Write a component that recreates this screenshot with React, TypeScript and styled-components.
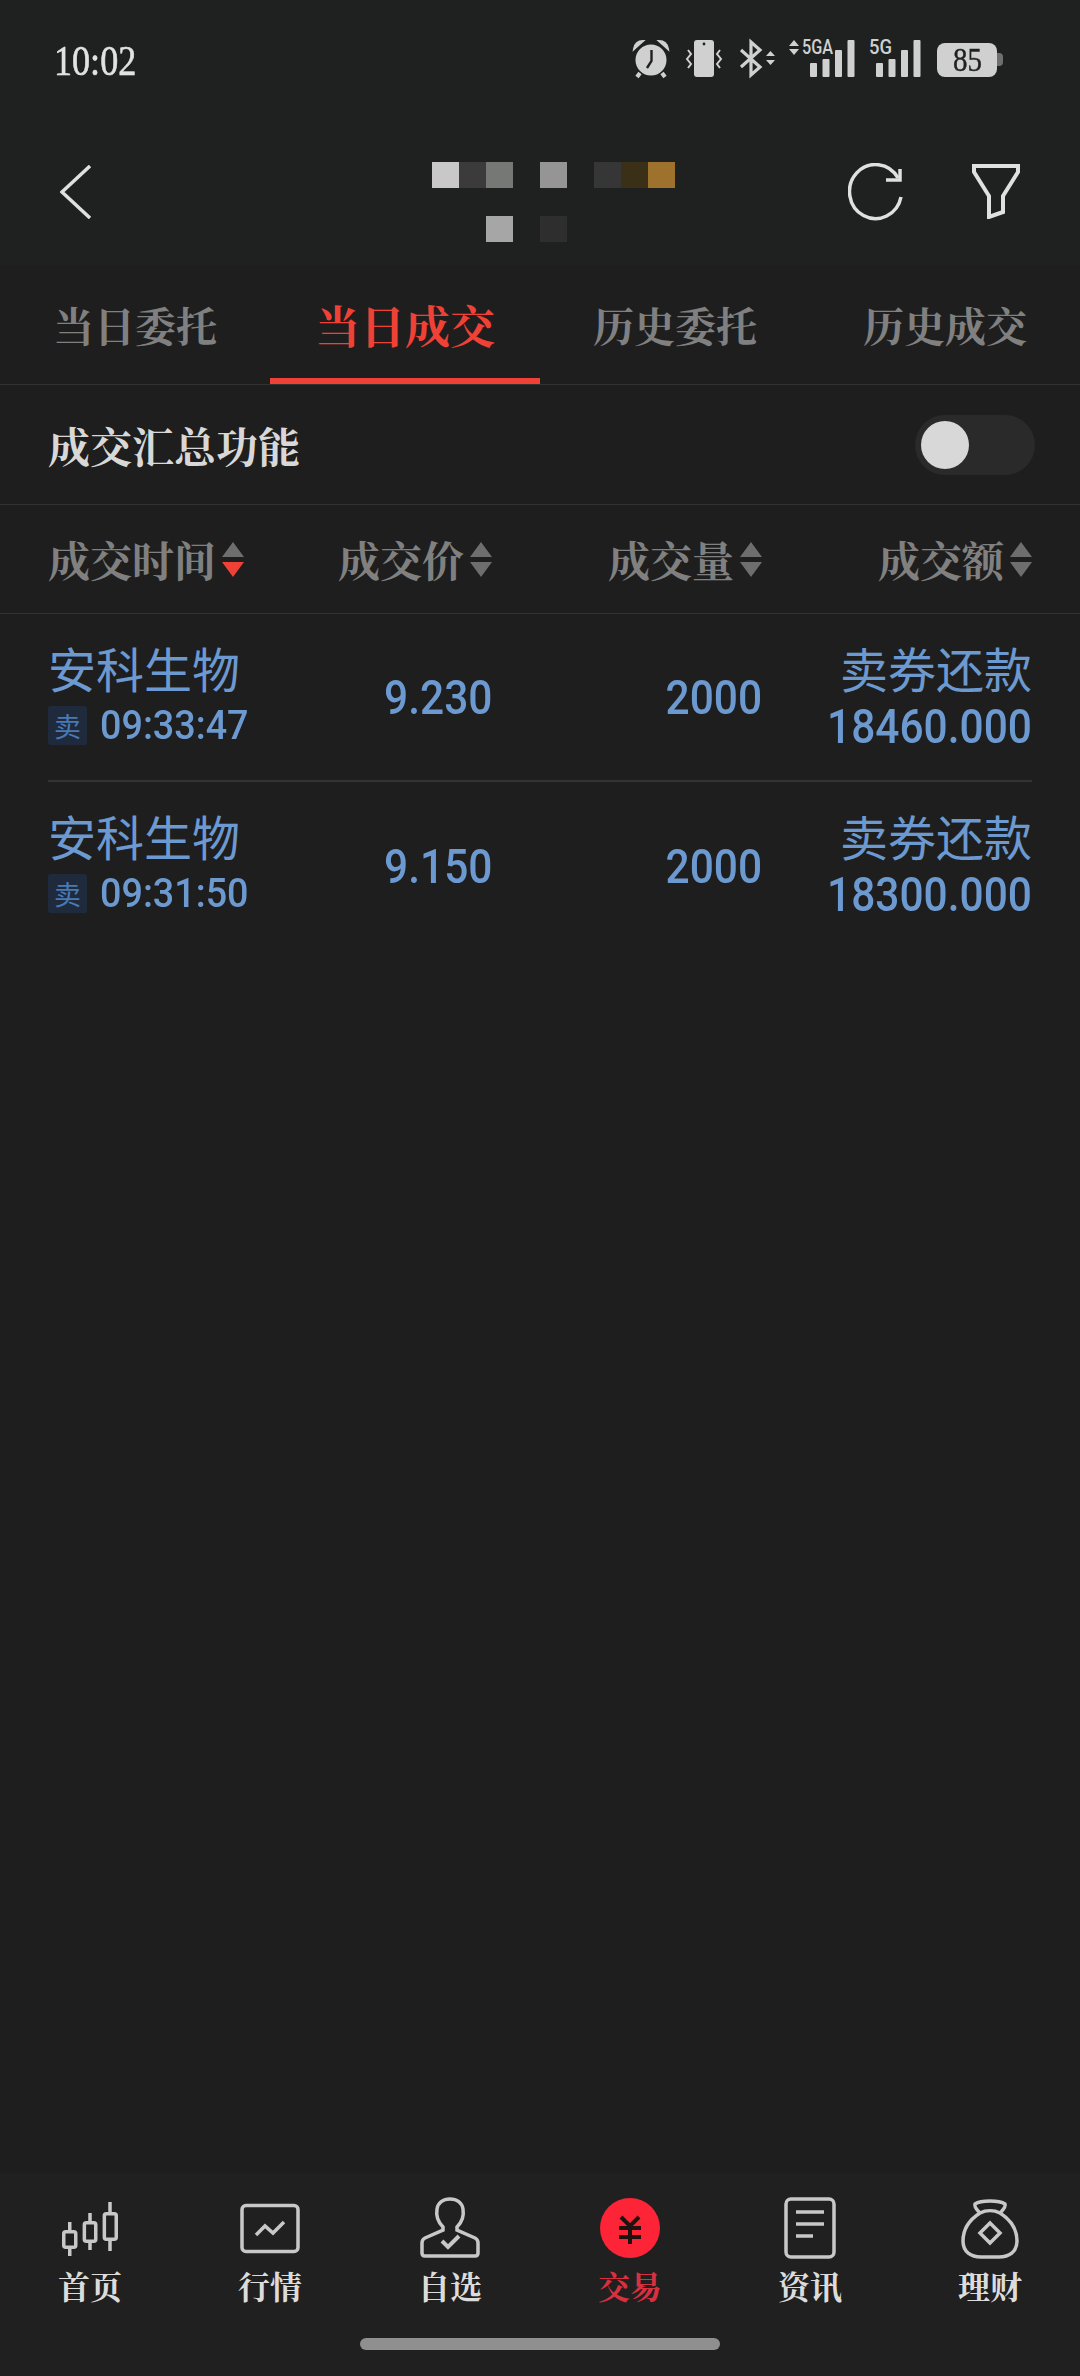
import React from 'react';
import styled, { createGlobalStyle } from 'styled-components';

const CJK = `'Noto Serif CJK SC', 'Noto Sans CJK SC', serif`;
const NUM = `Roboto, 'Noto Sans CJK SC', sans-serif`;

const GlobalStyle = createGlobalStyle`
  html, body {
    margin: 0;
    padding: 0;
    background: #1e1e1e;
  }
  * { box-sizing: border-box; }
`;

const Page = styled.div`
  width: 1080px;
  height: 2376px;
  display: flex;
  flex-direction: column;
  overflow: hidden;
  background: #1e1e1e;
`;

const TopArea = styled.div`
  height: 265px;
  background: #1f2120;
`;

const StatusBar = styled.div`
  height: 84px;
  padding: 40px 83px 0 54px;
  display: flex;
  justify-content: space-between;
  align-items: flex-start;
`;

const Clock = styled.div`
  font-family: 'Liberation Serif', serif;
  font-size: 43px;
  line-height: 41px;
  color: #e2e2e2;
  -webkit-text-stroke: 0.6px #e2e2e2;
  transform: scaleX(0.84);
  transform-origin: left center;
`;

const StatusIcons = styled.div`
  display: flex;
  align-items: flex-start;
  svg { display: block; overflow: visible; }
`;

const SignalGap = styled.div`
  width: 14px;
`;

const Battery = styled.div`
  width: 60px;
  height: 34px;
  margin: 3px 0 0 16px;
  border-radius: 8px;
  background: #d0d0d0;
  color: #1f2120;
  text-align: center;
  position: relative;
  &::after {
    content: '';
    position: absolute;
    right: -6px;
    top: 10px;
    width: 6px;
    height: 13px;
    border-radius: 0 4px 4px 0;
    background: #6f6f6f;
  }
`;

const BatteryLevel = styled.span`
  display: inline-block;
  font-family: 'Liberation Serif', serif;
  font-size: 33px;
  line-height: 34px;
  -webkit-text-stroke: 0.4px #1f2120;
  transform: scaleX(0.88);
`;

const NavBar = styled.div`
  height: 181px;
  padding: 0 59px 0 60px;
  display: grid;
  grid-template-columns: 372px 243px 1fr;
  align-items: start;
  svg { display: block; }
`;

const BackIcon = styled.svg`
  margin-top: 81px;
`;

const Title = styled.div`
  margin-top: 78px;
  display: grid;
  grid-template-columns: repeat(9, 27px);
  grid-auto-rows: 26px;
  row-gap: 28px;
`;

const Cell = styled.div<{ $c?: string }>`
  background: ${(p) => p.$c || 'transparent'};
  filter: blur(0.6px);
`;

const NavActions = styled.div`
  display: flex;
  margin-top: 79px;
  gap: 67px;
  align-items: flex-start;
  justify-content: flex-end;
`;

const Tabs = styled.div`
  height: 120px;
  display: grid;
  grid-template-columns: repeat(4, 270px);
  border-bottom: 1px solid #333;
`;

const Tab = styled.div<{ $active?: boolean }>`
  font-family: ${CJK};
  font-size: ${(p) => (p.$active ? '45px' : '41px')};
  font-weight: 700;
  color: ${(p) => (p.$active ? '#ef4136' : '#808080')};
  text-align: center;
  line-height: 119px;
  height: 119px;
  border-bottom: ${(p) => (p.$active ? '6px solid #ef4136' : '0')};
`;

const SummaryRow = styled.div`
  height: 120px;
  padding: 0 45px 0 48px;
  display: flex;
  align-items: center;
  justify-content: space-between;
  border-bottom: 1px solid #333;
`;

const SummaryLabel = styled.div`
  font-family: ${CJK};
  font-size: 42px;
  font-weight: 700;
  color: #d8d8d8;
`;

const Toggle = styled.div`
  width: 120px;
  height: 60px;
  border-radius: 30px;
  background: #2a2a2a;
  padding: 6px;
`;

const Knob = styled.div`
  width: 48px;
  height: 48px;
  border-radius: 50%;
  background: #d8d8d8;
`;

const HeadRow = styled.div`
  height: 109px;
  padding: 0 48px;
  display: grid;
  grid-template-columns: 444px 270px 270px;
  border-bottom: 1px solid #333;
`;

const HeadGroup = styled.div`
  display: grid;
  grid-template-columns: 1fr 1fr;
`;

const HeadCell = styled.div<{ $right?: boolean }>`
  display: flex;
  align-items: center;
  justify-content: ${(p) => (p.$right ? 'flex-end' : 'flex-start')};
  font-family: ${CJK};
  font-size: 42px;
  font-weight: 700;
  color: #808080;
`;

const SortWrap = styled.div`
  display: flex;
  flex-direction: column;
  gap: 5px;
  margin-left: 6px;
`;

const Arrow = styled.div<{ $down?: boolean; $on?: boolean }>`
  width: 0;
  height: 0;
  border-left: 11px solid transparent;
  border-right: 11px solid transparent;
  ${(p) =>
    p.$down
      ? `border-top: 15px solid ${p.$on ? '#ef4136' : '#6e6e6e'};`
      : `border-bottom: 15px solid ${p.$on ? '#ef4136' : '#6e6e6e'};`}
`;

const DataList = styled.div`
  flex: 1;
  padding: 0 48px;
`;

const DataRow = styled.div<{ $last?: boolean }>`
  height: 168px;
  display: grid;
  grid-template-columns: 444px 270px 270px;
  border-bottom: ${(p) => (p.$last ? '0' : '2px solid #333')};
  color: #6c99cf;
`;

const FirstGroup = styled.div`
  display: grid;
  grid-template-columns: 1fr 1fr;
`;

const NameCell = styled.div`
  padding-top: 24px;
`;

const StockName = styled.div`
  font-family: 'Noto Sans CJK SC', sans-serif;
  font-size: 48px;
  line-height: 58px;
  white-space: nowrap;
`;

const TimeLine = styled.div`
  margin-top: 10px;
  display: flex;
  align-items: center;
  gap: 13px;
`;

const SideBadge = styled.div`
  width: 39px;
  height: 39px;
  border-radius: 3px;
  background: #1f2b3d;
  color: #4a7ab4;
  font-family: 'Noto Sans CJK SC', sans-serif;
  font-size: 27px;
  line-height: 39px;
  text-align: center;
`;

const TimeText = styled.div`
  font-family: ${NUM};
  font-size: 41px;
  font-weight: 500;
  line-height: 39px;
  transform: scaleX(0.92);
  transform-origin: left center;
`;

const NumCell = styled.div`
  display: flex;
  align-items: center;
  justify-content: flex-end;
`;

const NumText = styled.span`
  font-family: ${NUM};
  font-size: 48px;
  font-weight: 500;
  transform: scaleX(0.885);
  transform-origin: right center;
`;

const AmountCell = styled.div`
  padding-top: 24px;
  text-align: right;
`;

const AmountType = styled.div`
  font-family: 'Noto Sans CJK SC', sans-serif;
  font-size: 48px;
  line-height: 58px;
`;

const AmountValue = styled.div`
  margin-top: 6px;
  font-family: ${NUM};
  font-size: 48px;
  font-weight: 500;
  line-height: 50px;
  transform: scaleX(0.885);
  transform-origin: right center;
`;

const BottomBar = styled.div`
  height: 203px;
  background: #202020;
  display: flex;
  flex-direction: column;
  align-items: center;
`;

const BottomTabs = styled.div`
  width: 100%;
  display: grid;
  grid-template-columns: repeat(6, 180px);
  padding-top: 24px;
`;

const BottomTab = styled.div<{ $active?: boolean }>`
  display: flex;
  flex-direction: column;
  align-items: center;
  font-family: ${CJK};
  font-size: 32px;
  font-weight: 700;
  line-height: 44px;
  color: ${(p) => (p.$active ? '#d93040' : '#dcdcdc')};
  svg { display: block; }
`;

const TabLabel = styled.div`
  margin-top: 4px;
`;

const HomeIndicator = styled.div`
  margin-top: 31px;
  width: 360px;
  height: 12px;
  border-radius: 6px;
  background: #8f8f8f;
`;

const LIGHT = '#d0d0d0';
const DARK = '#1f2120';
const LINE = '#c8c8c8';

const tabs = ['当日委托', '当日成交', '历史委托', '历史成交'];

const titleCells: (string | undefined)[] = [
  '#c8c8c8', '#3a3b3a', '#767876', undefined, '#959595', undefined, '#353635', '#3a3018', '#9e722c',
  undefined, undefined, '#a6a6a6', undefined, '#2e2e2e', undefined, undefined, undefined, undefined,
];

const trades = [
  { time: '09:33:47', price: '9.230', amount: '18460.000' },
  { time: '09:31:50', price: '9.150', amount: '18300.000' },
];

function AlarmIcon() {
  return (
    <svg width="38" height="38" viewBox="0 0 38 38" style={{ marginRight: 16 }}>
      <path d="M2 9 C3 3 7 1 11 1 Z M36 9 C35 3 31 1 27 1 Z" fill={LIGHT} stroke={LIGHT} strokeWidth="2" />
      <path d="M8 33 L5 37 M30 33 L33 37" stroke={LIGHT} strokeWidth="4" />
      <circle cx="19" cy="20" r="15.5" fill={LIGHT} />
      <path d="M19.5 10 V21 L15 28" fill="none" stroke={DARK} strokeWidth="2.4" />
    </svg>
  );
}

function VibrateIcon() {
  return (
    <svg width="36" height="37" viewBox="0 0 36 37" style={{ marginRight: 18 }}>
      <rect x="8" y="0" width="20" height="37" rx="3" fill={LIGHT} />
      <circle cx="18" cy="4" r="1.4" fill={DARK} />
      <path d="M2 10 L5 14 L1 19 L5 24 L2 28 M34 10 L31 14 L35 19 L31 24 L34 28" fill="none" stroke={LIGHT} strokeWidth="2" />
    </svg>
  );
}

function BluetoothIcon() {
  return (
    <svg width="35" height="37" viewBox="0 0 35 37" style={{ marginRight: 14 }}>
      <path d="M1 10 L20 27 L11 35 V2 L20 10 L1 27" fill="none" stroke={LIGHT} strokeWidth="3.2" />
      <path d="M26 16 L30.500 11 L35 16 Z M26 20 L30.500 25 L35 20 Z" fill={LIGHT} />
    </svg>
  );
}

function SignalIcon({ label, arrows }: { label: string; arrows?: boolean }) {
  const left = arrows ? 21 : 7;
  const width = left + 45;
  return (
    <svg width={width} height="37" viewBox={`0 0 ${width} 37`}>
      {arrows && <path d="M0 6 L5 0 L10 6 Z M0 9 L5 15 L10 9 Z" fill={LIGHT} />}
      <text x={arrows ? 13 : 0} y="14" fontFamily="Roboto, sans-serif" fontSize="20" fontWeight="500" fill={LIGHT} textLength={arrows ? 31 : 23} lengthAdjust="spacingAndGlyphs">
        {label}
      </text>
      <rect x={left} y="23" width="7" height="14" rx="1" fill={LIGHT} />
      <rect x={left + 12.500} y="19" width="7" height="18" rx="1" fill={LIGHT} />
      <rect x={left + 25} y="10" width="7" height="27" rx="1" fill={LIGHT} />
      <rect x={left + 37.500} y="0" width="7" height="37" rx="1" fill={LIGHT} />
    </svg>
  );
}

function HomeIcon() {
  return (
    <svg width="60" height="62" viewBox="0 0 60 62" fill="none" stroke={LINE} strokeWidth="3.500">
      <rect x="3.750" y="34.750" width="12" height="15.500" rx="2" />
      <path d="M9.750 25 V34.750 M9.750 50.250 V59" />
      <rect x="24.350" y="25.750" width="11.400" height="18.500" rx="2" />
      <path d="M30 16 V25.750 M30 44.250 V53" />
      <rect x="44.350" y="16.750" width="11.900" height="25.500" rx="2" />
      <path d="M50 5 V16.750 M50 42.250 V54" />
    </svg>
  );
}

function MarketIcon() {
  return (
    <svg width="60" height="62" viewBox="0 0 60 62" fill="none" stroke={LINE} strokeWidth="3.500">
      <rect x="2" y="8.500" width="56" height="46" rx="4" />
      <path d="M16 38 L25 29 L33 36 L44 25" />
    </svg>
  );
}

function WatchIcon() {
  return (
    <svg width="62" height="62" viewBox="0 0 62 62" fill="none" stroke={LINE} strokeWidth="3.500">
      <path d="M24 30 C18 24 17 18 18 12 C19 6 24 2 31 2 C38 2 43 6 44 12 C45 18 44 24 38 30 V33 L56 41 C58 42 59 44 59 46 V56 C59 58 58 59 56 59 H6 C4 59 3 58 3 56 V46 C3 44 4 42 6 41 L24 33 Z" />
      <path d="M23 44 L29 50 L40 39" strokeWidth="4" />
    </svg>
  );
}

function TradeIcon() {
  return (
    <svg width="60" height="62" viewBox="0 0 60 62">
      <circle cx="30" cy="31" r="30" fill="#fd2437" />
      <path d="M21 20 L30 29 L39 20 M19 31 H41 M19 40 H41 M30 29 V47" fill="none" stroke="#20120f" strokeWidth="4" />
    </svg>
  );
}

function NewsIcon() {
  return (
    <svg width="52" height="62" viewBox="0 0 52 62" fill="none" stroke={LINE} strokeWidth="3.500">
      <rect x="2" y="2" width="48" height="58" rx="5" />
      <path d="M12 15 H40 M12 27 H40 M12 39 H29" />
    </svg>
  );
}

function WealthIcon() {
  return (
    <svg width="58" height="62" viewBox="0 0 58 62" fill="none" stroke={LINE} strokeWidth="3.500">
      <path d="M19 16 C15 12 13 9 14 7 C20 3 38 3 44 7 C45 9 43 12 39 16" />
      <path d="M19 16 C8 23 2 33 2 44 C2 55 10 60 20 60 H38 C48 60 56 55 56 44 C56 33 50 23 39 16 C33 13 25 13 19 16 Z" />
      <path d="M29 26 L39 36 L29 46 L19 36 Z" />
    </svg>
  );
}

const bottomTabs = [
  { label: '首页', icon: <HomeIcon /> },
  { label: '行情', icon: <MarketIcon /> },
  { label: '自选', icon: <WatchIcon /> },
  { label: '交易', icon: <TradeIcon />, active: true },
  { label: '资讯', icon: <NewsIcon /> },
  { label: '理财', icon: <WealthIcon /> },
];

export default function App() {
  return (
    <Page>
      <GlobalStyle />
      <TopArea>
        <StatusBar>
          <Clock>10:02</Clock>
          <StatusIcons>
            <AlarmIcon />
            <VibrateIcon />
            <BluetoothIcon />
            <SignalIcon label="5GA" arrows />
            <SignalGap />
            <SignalIcon label="5G" />
            <Battery>
              <BatteryLevel>85</BatteryLevel>
            </Battery>
          </StatusIcons>
        </StatusBar>
        <NavBar>
          <BackIcon width="32" height="54" viewBox="0 0 32 54" fill="none" stroke="#e0e0e0" strokeWidth="3.500">
            <path d="M30 1 L2 27 L30 53" />
          </BackIcon>
          <Title>
            {titleCells.map((c, i) => (
              <Cell key={i} $c={c} />
            ))}
          </Title>
          <NavActions>
            <svg width="56" height="58" viewBox="0 0 56 58" fill="none" stroke="#e0e0e0" strokeWidth="3.500">
              <path d="M50 15 A26 27 0 1 0 53 34" />
              <path d="M52 6 V17 H38" />
            </svg>
            <svg width="50" height="56" viewBox="0 0 50 56" fill="none" stroke="#e0e0e0" strokeWidth="4">
              <path d="M3 3 H47 V9 L32 33 V49 L18 54 V33 L3 9 Z" />
            </svg>
          </NavActions>
        </NavBar>
      </TopArea>
      <Tabs>
        {tabs.map((t, i) => (
          <Tab key={t} $active={i === 1}>
            {t}
          </Tab>
        ))}
      </Tabs>
      <SummaryRow>
        <SummaryLabel>成交汇总功能</SummaryLabel>
        <Toggle>
          <Knob />
        </Toggle>
      </SummaryRow>
      <HeadRow>
        <HeadGroup>
          <HeadCell>
            成交时间
            <SortWrap>
              <Arrow />
              <Arrow $down $on />
            </SortWrap>
          </HeadCell>
          <HeadCell $right>
            成交价
            <SortWrap>
              <Arrow />
              <Arrow $down />
            </SortWrap>
          </HeadCell>
        </HeadGroup>
        <HeadCell $right>
          成交量
          <SortWrap>
            <Arrow />
            <Arrow $down />
          </SortWrap>
        </HeadCell>
        <HeadCell $right>
          成交额
          <SortWrap>
            <Arrow />
            <Arrow $down />
          </SortWrap>
        </HeadCell>
      </HeadRow>
      <DataList>
        {trades.map((t, i) => (
          <DataRow key={t.time} $last={i === trades.length - 1}>
            <FirstGroup>
              <NameCell>
                <StockName>安科生物</StockName>
                <TimeLine>
                  <SideBadge>卖</SideBadge>
                  <TimeText>{t.time}</TimeText>
                </TimeLine>
              </NameCell>
              <NumCell>
                <NumText>{t.price}</NumText>
              </NumCell>
            </FirstGroup>
            <NumCell>
              <NumText>2000</NumText>
            </NumCell>
            <AmountCell>
              <AmountType>卖券还款</AmountType>
              <AmountValue>{t.amount}</AmountValue>
            </AmountCell>
          </DataRow>
        ))}
      </DataList>
      <BottomBar>
        <BottomTabs>
          {bottomTabs.map((b) => (
            <BottomTab key={b.label} $active={b.active}>
              {b.icon}
              <TabLabel>{b.label}</TabLabel>
            </BottomTab>
          ))}
        </BottomTabs>
        <HomeIndicator />
      </BottomBar>
    </Page>
  );
}
